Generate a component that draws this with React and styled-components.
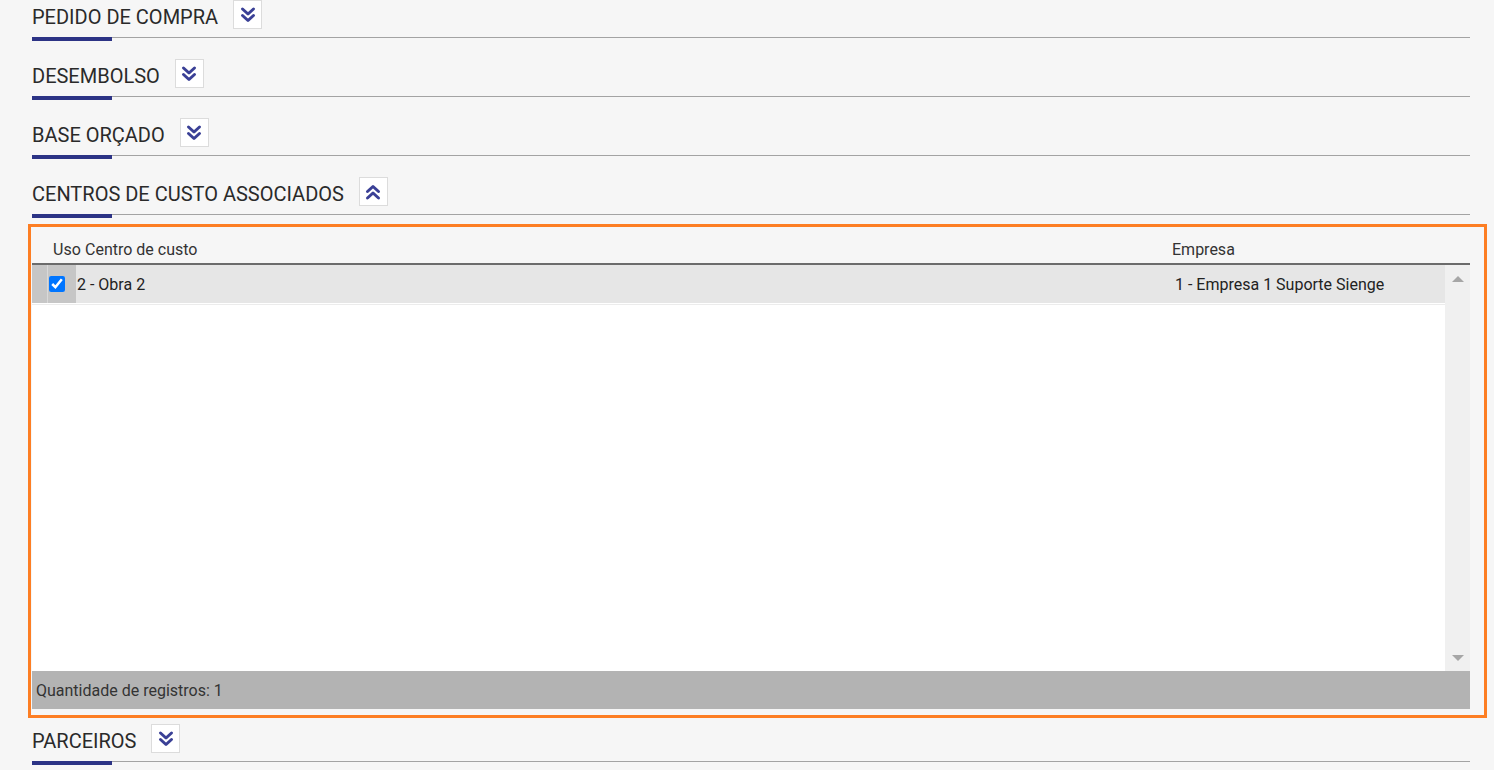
import React from "react";
import styled, { createGlobalStyle } from "styled-components";

const Global = createGlobalStyle`
  html, body { margin: 0; padding: 0; background: #f6f6f6; }
  body { font-family: Roboto, "Liberation Sans", Arial, sans-serif; color: #222; overflow: hidden; }
`;

const Page = styled.div`
  width: 1494px;
  height: 770px;
  padding: 0 24px 0 32px;
  box-sizing: border-box;
  overflow: hidden;
  background: #f6f6f6;
`;

const Section = styled.section`
  display: flex;
  flex-direction: column;
`;

const Header = styled.div`
  position: relative;
  display: flex;
  align-items: flex-end;
  gap: 15px;
  padding: ${(p) => p.$top}px 0 8px;
  border-bottom: 1px solid #a3a3a3;
  &::after {
    content: "";
    position: absolute;
    left: 0;
    bottom: -4px;
    width: 80px;
    height: 4px;
    background: #2c3385;
  }
`;

const Title = styled.h2`
  margin: 0;
  font-size: 20px;
  line-height: 23px;
  font-weight: 400;
  color: #2a2a2a;
  text-transform: uppercase;
  white-space: nowrap;
`;

const ToggleButton = styled.button`
  width: 29px;
  height: 29px;
  padding: 0;
  box-sizing: border-box;
  border: 1px solid #dcdcdc;
  background: #fff;
  display: flex;
  align-items: center;
  justify-content: center;
  cursor: pointer;
`;

const Frame = styled.div`
  margin: 9px -17px -15px -4px;
  border: 3px solid #fd7e23;
  padding: 0 14px 6px 1px;
  display: flex;
  flex-direction: column;
`;

const GridHead = styled.div`
  display: grid;
  grid-template-columns: 16px 28px 1094px 1fr;
  height: 38px;
  padding-top: 8px;
  box-sizing: border-box;
  align-items: center;
  border-bottom: 2px solid #6b6b6b;
  font-size: 16px;
  color: #333;
`;

const HeadCell = styled.div`
  padding-left: ${(p) => p.$pl || 0}px;
  white-space: nowrap;
  overflow: visible;
`;

const DataArea = styled.div`
  display: flex;
  height: 406px;
`;

const Rows = styled.div`
  flex: 1;
  display: flex;
  flex-direction: column;
  background: #fff;
`;

const Row = styled.div`
  display: grid;
  grid-template-columns: 16px 28px 1094px 1fr;
  height: 38px;
  background: #e6e6e6;
  border-bottom: 1px solid #fff;
  box-shadow: 0 1px 0 #ececec;
  align-items: stretch;
  font-size: 16px;
  color: #222;
`;

const Indicator = styled.div`
  background: #c6c6c6;
  border-right: 1px solid #d9d9d9;
`;

const CheckCell = styled.div`
  background: #c6c6c6;
  display: flex;
  align-items: center;
  padding-left: 1px;
`;

const Check = styled.input`
  width: 16px;
  height: 16px;
  margin: 0;
  accent-color: #0075ff;
`;

const Cell = styled.div`
  display: flex;
  align-items: center;
  padding-left: ${(p) => p.$pl || 0}px;
  white-space: nowrap;
`;

const Scrollbar = styled.div`
  width: 25px;
  background: #f0f0f0;
  display: flex;
  flex-direction: column;
  justify-content: space-between;
  align-items: center;
  padding: 11px 0 10px;
  box-sizing: border-box;
`;

const Arrow = styled.div`
  width: 0;
  height: 0;
  border-left: 6px solid transparent;
  border-right: 6px solid transparent;
  ${(p) =>
    p.$up
      ? "border-bottom: 6px solid #a6a6a6;"
      : "border-top: 6px solid #a6a6a6;"}
`;

const Footer = styled.div`
  height: 38px;
  background: #b3b3b3;
  display: flex;
  align-items: center;
  padding-left: 4px;
  font-size: 16px;
  color: #333;
`;

const DoubleChevron = ({ up }) => (
  <svg width="20" height="20" viewBox="0 0 20 20" aria-hidden="true">
    <g
      fill="none"
      stroke="#3a4096"
      strokeWidth="3"
      strokeLinecap="round"
      strokeLinejoin="round"
      transform={up ? "rotate(180 10 10)" : undefined}
    >
      <path d="M4.5 4 L10 9 L15.5 4" />
      <path d="M4.5 10.5 L10 15.5 L15.5 10.5" />
    </g>
  </svg>
);

const SectionBlock = ({ title, open, top, children }) => (
  <Section>
    <Header $top={top}>
      <Title>{title}</Title>
      <ToggleButton type="button" aria-label={open ? "Recolher" : "Expandir"}>
        <DoubleChevron up={open} />
      </ToggleButton>
    </Header>
    {children}
  </Section>
);

export default function App() {
  return (
    <>
      <Global />
      <Page>
        <SectionBlock title="Pedido de compra" top={0} />
        <SectionBlock title="Desembolso" top={21} />
        <SectionBlock title="Base orçado" top={21} />
        <SectionBlock title="Centros de custo associados" top={21} open>
          <Frame>
            <GridHead>
              <HeadCell />
              <HeadCell $pl={5}>Uso</HeadCell>
              <HeadCell $pl={9}>Centro de custo</HeadCell>
              <HeadCell $pl={2}>Empresa</HeadCell>
            </GridHead>
            <DataArea>
              <Rows>
                <Row>
                  <Indicator />
                  <CheckCell>
                    <Check type="checkbox" checked readOnly />
                  </CheckCell>
                  <Cell $pl={1}>2 - Obra 2</Cell>
                  <Cell $pl={5}>1 - Empresa 1 Suporte Sienge</Cell>
                </Row>
              </Rows>
              <Scrollbar>
                <Arrow $up />
                <Arrow />
              </Scrollbar>
            </DataArea>
            <Footer>Quantidade de registros: 1</Footer>
          </Frame>
        </SectionBlock>
        <SectionBlock title="Parceiros" top={21} />
      </Page>
    </>
  );
}
